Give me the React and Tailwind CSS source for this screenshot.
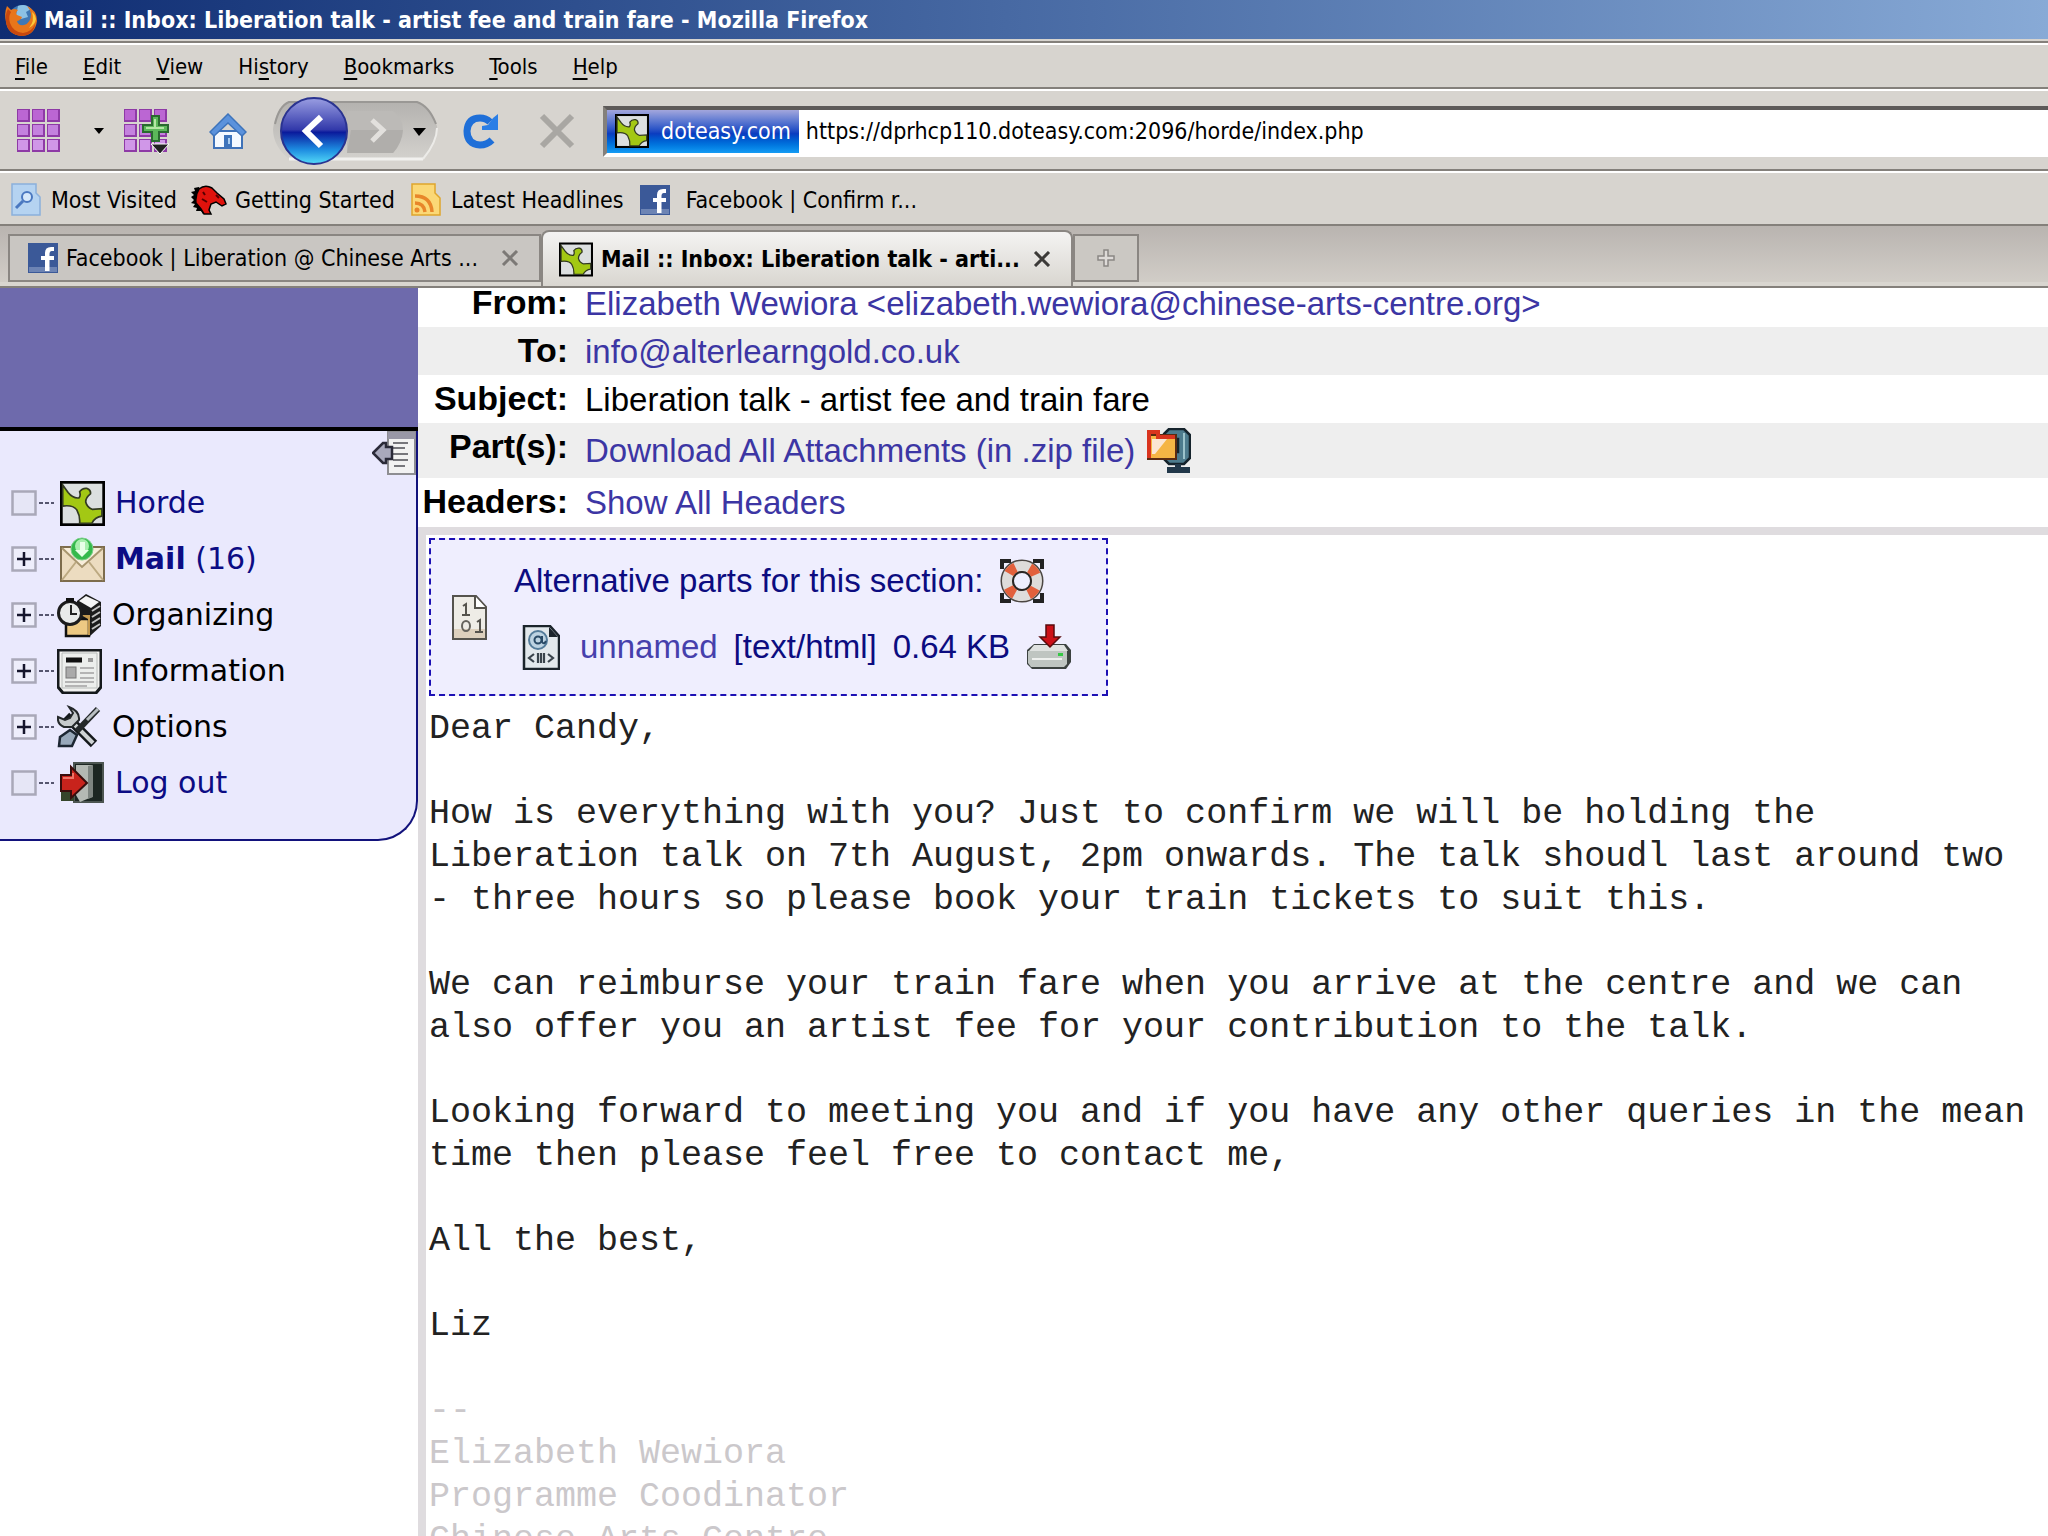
import { useState } from 'react'

const menus = [
  ['', 'F', 'ile'],
  ['', 'E', 'dit'],
  ['', 'V', 'iew'],
  ['Hi', 's', 'tory'],
  ['', 'B', 'ookmarks'],
  ['', 'T', 'ools'],
  ['', 'H', 'elp']
]

const paragraphs = [
  ['Dear Candy,'],
  [
    'How is everything with you? Just to confirm we will be holding the',
    'Liberation talk on 7th August, 2pm onwards. The talk shoudl last around two',
    '- three hours so please book your train tickets to suit this.'
  ],
  [
    'We can reimburse your train fare when you arrive at the centre and we can',
    'also offer you an artist fee for your contribution to the talk.'
  ],
  [
    'Looking forward to meeting you and if you have any other queries in the mean',
    'time then please feel free to contact me,'
  ],
  ['All the best,'],
  ['Liz']
]

const signature = ['--', 'Elizabeth Wewiora', 'Programme Coodinator', 'Chinese Arts Centre']

function HordeIcon({ className }) {
  return (
    <svg viewBox="0 0 133 133" className={className}>
      <rect x="4" y="4" width="125" height="125" fill="#dcdfe0" stroke="#000" strokeWidth="8" />
      <path
        d="M8 12L24 34Q38 52 56 50Q62 44 58 32Q66 20 80 22Q92 26 90 38Q76 48 76 62Q80 78 96 84L124 82V104Q104 106 94 125H58Q60 104 50 86Q40 70 8 74Z"
        fill="#a3c814" stroke="#333a22" strokeWidth="5"
      />
    </svg>
  )
}

function FacebookIcon({ className }) {
  return (
    <svg viewBox="0 0 30 30" className={className}>
      <rect width="30" height="30" fill="#3b5998" />
      <rect x="1" y="24" width="28" height="5" fill="#6d84b4" />
      <path d="M17 28V17H13V13H17V10Q17 4 23 4H26V8H23.500Q21.500 8 21.500 10.500V13H26V17H21.500V28Z" fill="#fff" />
    </svg>
  )
}

function FirefoxIcon() {
  return (
    <svg viewBox="0 0 34 34" className="h-[34px] w-[34px]">
      <circle cx="18" cy="15" r="13" fill="#3f78b4" />
      <path d="M14 3Q22 0 27 6L22 9L24 14L17 16L12 12Z" fill="#8cc2e4" />
      <path
        d="M3 3L7 7Q10 5 14 7Q11 10 13 12L18 14Q17 17 13 18Q14 23 20 22Q27 20 27 11Q26 6 23 3Q33 7 33 18Q31 32 18 33Q4 32 2 19Q0 10 3 3Z"
        fill="#e8761a"
      />
      <path d="M4 6L7 9Q4 14 6 20Q9 29 19 30Q28 29 31 21Q30 32 18 33Q4 32 2 19Q1 11 4 6Z" fill="#c8480e" />
      <path d="M28 9Q31 18 25 25Q31 22 32 16Q31 11 28 9Z" fill="#fbc93a" />
    </svg>
  )
}

function GridIcon({ plus }) {
  const cells = [0, 1, 2]
  return (
    <svg viewBox="0 0 46 46" className="h-[46px] w-[46px]">
      {cells.map(r => cells.map(c => (
        <g key={`${r}-${c}`}>
          <rect x={c * 15 + 1} y={r * 15 + 1} width="13" height="13" fill="#8e3aa6" />
          <rect x={c * 15 + 2} y={r * 15 + 2} width="10" height="10" fill={r === 0 ? '#bb66d3' : r === 1 ? '#c481de' : '#d097e8'} />
        </g>
      )))}
      {plus && (
        <>
          <path d="M29 8H36V17H45V24H36V33H29V24H20V17H29Z" fill="#5cb85a" stroke="#2a6a30" strokeWidth="2" />
          <path d="M32 11V21M23 20H41" stroke="#b4e6a6" strokeWidth="2" />
          <path d="M28 36H46L37 46Z" fill="#222" stroke="#fff" strokeWidth="1" />
        </>
      )}
    </svg>
  )
}

function Caret({ className }) {
  return (
    <svg viewBox="0 0 12 7" className={className}>
      <path d="M0 0H12L6 7Z" fill="#000" />
    </svg>
  )
}

function HomeIcon() {
  return (
    <svg viewBox="0 0 38 36" className="h-9 w-[38px]">
      <path d="M5 18H33V35H5Z" fill="#f4f9ff" stroke="#3f72b8" strokeWidth="2" />
      <path d="M19 1L37 19L33 23L19 10L5 23L1 19Z" fill="#5b92dc" stroke="#3d73bb" strokeWidth="1.500" />
      <rect x="15" y="22" width="8" height="12" fill="#3d73bb" />
      <rect x="19" y="25" width="2" height="6" fill="#a8ccf0" />
    </svg>
  )
}

function BackForward() {
  return (
    <svg viewBox="0 0 168 70" className="h-[70px] w-[168px]">
      <defs>
        <linearGradient id="pill" x1="0" y1="0" x2="0" y2="1">
          <stop offset="0" stopColor="#b4b2af" />
          <stop offset="1" stopColor="#d3d1cd" />
        </linearGradient>
        <linearGradient id="back" x1="0" y1="0" x2="0" y2="1">
          <stop offset="0" stopColor="#9a9ee2" />
          <stop offset="0.480" stopColor="#3239aa" />
          <stop offset="0.520" stopColor="#0a1a9c" />
          <stop offset="0.780" stopColor="#1d8be0" />
          <stop offset="1" stopColor="#55dcf8" />
        </linearGradient>
      </defs>
      <path d="M18 6H146Q156 8 166 30Q166 44 152 63H18Q2 50 2 33Q4 14 18 6Z" fill="url(#pill)" />
      <path d="M152 63H18" stroke="#f2f1ef" strokeWidth="3" />
      <path d="M152 63Q166 46 166 32" stroke="#ecebe8" strokeWidth="2" fill="none" />
      <path d="M4 28Q8 10 18 6H146Q158 10 165 28" stroke="#9a9895" strokeWidth="2" fill="none" />
      <path d="M76 15H122Q132 22 132 34Q131 47 122 57H76Z" fill="#bcbab7" />
      <path d="M76 57H122Q131 47 132 34H80Z" fill="#b0aeab" />
      <path d="M101 24L112 34L101 45" stroke="#e2e0dd" strokeWidth="5" fill="none" />
      <ellipse cx="43" cy="35" rx="33" ry="33" fill="url(#back)" stroke="#2a3390" strokeWidth="2" />
      <path d="M50 21L35 35L50 50" stroke="#fff" strokeWidth="6" fill="none" />
      <path d="M142 32H155L148 40Z" fill="#000" />
    </svg>
  )
}

function ReloadIcon() {
  return (
    <svg viewBox="0 0 36 36" className="h-9 w-9">
      <path d="M29 27Q24 32 17 32Q4 31 4 18Q5 5 17 5Q23 5 27 9" stroke="#1f6fd8" strokeWidth="7" fill="none" />
      <path d="M35 1V17H19V13L25 12L30 5Z" fill="#2a7ee6" />
    </svg>
  )
}

function StopIcon() {
  return (
    <svg viewBox="0 0 36 36" className="h-9 w-9">
      <path d="M3 3L33 33M33 3L3 33" stroke="#a9a7a3" strokeWidth="6" />
    </svg>
  )
}

function SmartFolderIcon() {
  return (
    <svg viewBox="0 0 30 33" className="h-[33px] w-[30px]">
      <path d="M1 1H25V10L29 14V32H1Z" fill="#b5d3f1" stroke="#8bb0dc" strokeWidth="1.500" />
      <circle cx="16" cy="14" r="5" fill="#d6e8fa" stroke="#4a78c0" strokeWidth="2" />
      <path d="M12 18L5 25" stroke="#4a78c0" strokeWidth="3" />
    </svg>
  )
}

function DragonIcon() {
  return (
    <svg viewBox="0 0 36 30" className="h-[30px] w-9">
      <path d="M8 2L3 3L4 6L0 7L3 10L0 12L3 15L0 18L4 19L2 22L6 23L5 26L10 26L12 29L14 14Z" fill="#000" />
      <path
        d="M8 4Q14 -1 21 3L26 8L33 14L35 19L31 21L25 17L20 19L18 25L20 29H13L10 24L5 18Q4 10 8 4Z"
        fill="#e0120c" stroke="#000" strokeWidth="1.500"
      />
      <path d="M25 10L28 13M12 7L14 10M11 14L16 17" stroke="#500" strokeWidth="2" />
    </svg>
  )
}

function FeedIcon() {
  return (
    <svg viewBox="0 0 30 33" className="h-[33px] w-[30px]">
      <path d="M1 1H24V10L29 15V32H1Z" fill="#fbd876" stroke="#dfa52c" strokeWidth="1.500" />
      <path d="M4 13Q20 13 21 29M4 20Q13 20 14 29" stroke="#e8862a" strokeWidth="3.500" fill="none" />
      <circle cx="6" cy="27" r="2.500" fill="#e8862a" />
    </svg>
  )
}

function CloseIcon({ color }) {
  return (
    <svg viewBox="0 0 18 16" className="h-4 w-[18px]">
      <path d="M2 1L16 15M16 1L2 15" stroke={color} strokeWidth="3" />
    </svg>
  )
}

function NodeMark({ open }) {
  return (
    <svg viewBox="0 0 44 26" className="h-[26px] w-11">
      <rect x="1.500" y="1.500" width="23" height="23" fill={open ? '#eeeefb' : '#e6e6f6'} stroke="#a9a8b8" strokeWidth="2.500" />
      {open && <path d="M6 13H20M13 6V20" stroke="#15152c" strokeWidth="2.500" />}
      <path d="M28 13H43" stroke="#55556e" strokeWidth="2" strokeDasharray="4 2" />
    </svg>
  )
}

function MailIcon() {
  return (
    <svg viewBox="0 0 45 45" className="h-[45px] w-[45px]">
      <rect x="1" y="10" width="43" height="34" fill="#ecdcc0" stroke="#7d6c4c" strokeWidth="2" />
      <path d="M2 11L22 30L43 11" fill="#f8eedb" stroke="#a8966f" strokeWidth="2" />
      <path d="M2 43L16 25M43 43L29 25" stroke="#bca981" strokeWidth="2" />
      <circle cx="22" cy="12" r="11" fill="#35b94c" stroke="#7ccf8a" strokeWidth="1" />
      <circle cx="22" cy="9" r="7" fill="#a9efae" />
      <path d="M20 5H25V13H29L22 20L15 13H20Z" fill="#e8ffe8" />
    </svg>
  )
}

function OrganizingIcon() {
  return (
    <svg viewBox="0 0 45 45" className="h-[45px] w-[45px]">
      <path d="M20 8L29 1L44 9V33L33 43L20 30Z" fill="#1b1b1b" />
      <path d="M22 8L29 3L42 9L34 15Z" fill="#f4f4f4" />
      <path d="M35 18L43 13M35 24L43 19M35 30L43 25M35 36L43 31" stroke="#c2c2c2" strokeWidth="2" />
      <path d="M9 26H32V43H9Z" fill="#edc983" stroke="#111" strokeWidth="2.500" />
      <path d="M24 22H33V42H31V26Z" fill="#c49a50" />
      <circle cx="13" cy="20" r="11.500" fill="#e9ebea" stroke="#1c1c1c" strokeWidth="3" />
      <path d="M14 12V21H20" stroke="#222" strokeWidth="2" fill="none" />
      <path d="M9 7H17" stroke="#111" strokeWidth="4" />
    </svg>
  )
}

function InformationIcon() {
  return (
    <svg viewBox="0 0 45 45" className="h-[45px] w-[45px]">
      <path d="M1 1H44V38L39 44H6L1 38Z" fill="#f2f2f0" stroke="#15191c" strokeWidth="3" />
      <path d="M5 4H40V39H5Z" fill="#eceeec" stroke="#b8bcba" strokeWidth="1" />
      <path d="M9 11H25" stroke="#111" strokeWidth="5" />
      <path d="M31 11H36" stroke="#999" strokeWidth="4" />
      <rect x="9" y="18" width="10" height="11" fill="#aaa" stroke="#777" strokeWidth="1" />
      <path d="M23 19H37M23 24H37M23 29H37M8 33H37M8 37H30" stroke="#b4b4b4" strokeWidth="2" />
    </svg>
  )
}

function OptionsIcon() {
  return (
    <svg viewBox="0 0 45 45" className="h-[45px] w-[45px]">
      <path d="M9 11L37 39" stroke="#15191c" strokeWidth="9" />
      <path d="M15 17L36 38" stroke="#cfd3d4" strokeWidth="4" />
      <path d="M12 2L16 8L13 13L8 15L1 12Q0 19 7 22L15 22L22 15Q23 6 12 2Z" fill="#c6cacb" stroke="#24282a" strokeWidth="2" />
      <path d="M41 4L20 26" stroke="#24282a" strokeWidth="6" />
      <path d="M41 4L30 15" stroke="#b9bfc2" strokeWidth="3" />
      <path d="M3 32L13 25L20 30L15 41H2Z" fill="#98a8ba" stroke="#1c2632" strokeWidth="2.500" />
    </svg>
  )
}

function LogoutIcon() {
  return (
    <svg viewBox="0 0 45 45" className="h-[45px] w-[45px]">
      <rect x="14" y="2" width="29" height="39" fill="#1c2622" stroke="#4c5551" strokeWidth="2" />
      <path d="M16 4L32 4V36L20 41L16 34Z" fill="#b4b9b4" />
      <path d="M28 5L33 4V36L28 38Z" fill="#7e8581" />
      <path d="M1 31H14V40H1Z" fill="#35452a" />
      <path d="M1 14H11V6L27 22L11 37V30H1Z" fill="#c8231c" stroke="#3a0d0c" strokeWidth="2" />
      <path d="M3 17H13V12" stroke="#ee7466" strokeWidth="2" fill="none" />
    </svg>
  )
}

function CollapseIcon() {
  return (
    <svg viewBox="0 0 44 44" className="h-11 w-11">
      <rect x="16" y="1" width="27" height="42" fill="#f2f2f2" stroke="#8e8e92" strokeWidth="2" />
      <rect x="16" y="1" width="27" height="7" fill="#9897a6" />
      <path d="M21 12H36M19 17H33M20 23H36M21 29H36M22 35H33" stroke="#77777c" strokeWidth="2" />
      <path d="M1 22L11 12H14V16H20V28H14V32H11Z" fill="#a9a9bc" stroke="#2a2a38" strokeWidth="2.500" />
    </svg>
  )
}

function ZipIcon() {
  return (
    <svg viewBox="0 0 44 46" className="h-[46px] w-11">
      <path d="M17 6L22 1H37L43 7V30L37 36H22L17 31V24H31V11H17Z" fill="#4d7b8d" stroke="#15232c" strokeWidth="2.500" />
      <path d="M37 5V31" stroke="#9cc3cb" strokeWidth="2" />
      <rect x="1" y="7" width="28" height="24" fill="#f5b545" stroke="#5a2b12" strokeWidth="2" />
      <path d="M2 30V4H11V9H28" stroke="#d9341e" strokeWidth="4" fill="none" />
      <path d="M5 11H20L8 26H5Z" fill="#fbe6d4" />
      <path d="M31 36V42M20 42H43" stroke="#22384a" strokeWidth="6" />
    </svg>
  )
}

function BinaryFileIcon() {
  return (
    <svg viewBox="0 0 35 45" className="h-[45px] w-[35px]">
      <path d="M1 1H24L34 12V44H1Z" fill="#eeece6" stroke="#55534d" strokeWidth="2" />
      <path d="M2 34H33V43H2Z" fill="#ddd0bd" />
      <path d="M23 1V13H34" fill="#fff" stroke="#55534d" strokeWidth="2" />
      <path d="M11 11L14 9V19M10 20H18M25 27L28 25V36M23 37H31" stroke="#55534d" strokeWidth="2" fill="none" />
      <ellipse cx="14" cy="31" rx="4" ry="5" fill="none" stroke="#66645e" strokeWidth="2" />
    </svg>
  )
}

function HtmlFileIcon() {
  return (
    <svg viewBox="0 0 38 45" className="h-[45px] w-[38px]">
      <path d="M2 1H28L37 11V44H2Z" fill="#e2e8ec" stroke="#1b242b" strokeWidth="2.500" />
      <path d="M27 2V12H36Z" fill="#1b242b" />
      <circle cx="16" cy="15" r="9" fill="#bdd3e2" stroke="#547c9a" strokeWidth="2" />
      <circle cx="16" cy="15" r="3.500" fill="none" stroke="#294a66" strokeWidth="2" />
      <path d="M20 11V17Q22 20 24 16" stroke="#294a66" strokeWidth="2" fill="none" />
      <path d="M12 29L7 33L12 37M26 29L31 33L26 37M16 28V38M22 28V38M19 28V38" stroke="#3a444c" strokeWidth="2.200" fill="none" />
    </svg>
  )
}

function LifebuoyIcon() {
  return (
    <svg viewBox="0 0 44 44" className="h-11 w-11">
      <path d="M2 10V2H11M33 2H42V10M42 34V42H33M11 42H2V34" fill="none" stroke="#222" strokeWidth="4" />
      <circle cx="22" cy="22" r="15" fill="none" stroke="#4b4642" strokeWidth="13" />
      <circle cx="22" cy="22" r="15" fill="none" stroke="#dedcda" strokeWidth="10" />
      <circle cx="22" cy="22" r="15" fill="none" stroke="#e2603c" strokeWidth="10" strokeDasharray="9 14.560" strokeDashoffset="-7.500" />
      <circle cx="22" cy="22" r="9" fill="#eeeeff" stroke="#2a2624" strokeWidth="2" />
    </svg>
  )
}

function SaveIcon() {
  return (
    <svg viewBox="0 0 46 46" className="h-[46px] w-[46px]">
      <path d="M8 20H40L45 26V38L40 45H6L1 40V26Z" fill="#3c4240" />
      <path d="M8 21H38L42 27H3Z" fill="#dfe2e0" />
      <path d="M2 27H41V40L38 43H5L2 39Z" fill="#bfc5c1" />
      <path d="M6 35H36" stroke="#eef0ee" strokeWidth="2" />
      <rect x="32" y="29" width="5" height="3" fill="#35c845" />
      <path d="M20 1H28V13H34L24 23L14 13H20Z" fill="#cc1018" stroke="#5a0a0c" strokeWidth="1.500" />
    </svg>
  )
}

const tree = [
  { label: 'Horde', icon: <HordeIcon className="h-[45px] w-[45px]" />, link: true },
  { label: 'Mail', count: 16, icon: <MailIcon />, link: true, open: true },
  { label: 'Organizing', icon: <OrganizingIcon />, open: true },
  { label: 'Information', icon: <InformationIcon />, open: true },
  { label: 'Options', icon: <OptionsIcon />, open: true },
  { label: 'Log out', icon: <LogoutIcon />, link: true }
]

function Chrome() {
  const [url, setUrl] = useState('https://dprhcp110.doteasy.com:2096/horde/index.php')

  return (
    <header className="shrink-0 bg-[#d7d4cf] font-['DejaVu_Sans_Condensed','DejaVu_Sans',sans-serif] text-[23px] leading-7 whitespace-nowrap text-black">
      <div className="flex h-[39px] items-center gap-1.5 bg-linear-to-r from-[#0f2c72] to-[#88aad6] pl-1 font-bold text-white">
        <FirefoxIcon />
        <h1>Mail :: Inbox: Liberation talk - artist fee and train fare - Mozilla Firefox</h1>
      </div>

      <nav className="mt-[2px] flex h-12 items-center gap-[35px] border-y-2 border-t-[#84807b] border-b-[#84807b] pt-1 pl-[15px] text-[22px] shadow-[inset_0_2px_0_#fff]">
        {menus.map(([before, key, after]) => (
          <button key={before + key + after}>
            {before}<span className="underline decoration-2 underline-offset-4">{key}</span>{after}
          </button>
        ))}
      </nav>

      <div className="flex h-[82px] items-center border-b-2 border-[#84807b] pt-1 pl-4 shadow-[inset_0_2px_0_#fff]">
        <button aria-label="Speed dial"><GridIcon /></button>
        <button aria-label="Speed dial menu" className="ml-8"><Caret className="h-[6px] w-[10px]" /></button>
        <button aria-label="Add to speed dial" className="ml-[19px]"><GridIcon plus /></button>
        <button aria-label="Home" className="ml-10"><HomeIcon /></button>
        <button aria-label="Back and forward" className="ml-6"><BackForward /></button>
        <button aria-label="Reload" className="ml-6"><ReloadIcon /></button>
        <button aria-label="Stop" className="ml-10"><StopIcon /></button>
        <div className="ml-7 flex h-[51px] flex-1 border-y-4 border-l-4 border-t-[#5d5a59] border-b-white border-l-[#84807b] bg-white">
          <button className="flex items-center gap-3 bg-linear-to-b from-[#a3a6dc] from-0% via-[#0a3cc0] via-55% to-[#159cf4] px-2 text-white">
            <HordeIcon className="h-[34px] w-[34px]" />
            doteasy.com
          </button>
          <input
            aria-label="Location"
            value={url}
            onChange={e => setUrl(e.target.value)}
            className="min-w-0 flex-1 bg-white pl-[7px] outline-none"
          />
        </div>
      </div>

      <nav className="flex h-[55px] items-center border-b-2 border-[#84807b] pt-1 pl-[11px] shadow-[inset_0_2px_0_#fff]">
        <a href="#visited" className="flex items-center gap-2.5"><SmartFolderIcon />Most Visited</a>
        <a href="#started" className="ml-3.5 flex items-center gap-2"><DragonIcon />Getting Started</a>
        <a href="#headlines" className="ml-4 flex items-center gap-2.5"><FeedIcon />Latest Headlines</a>
        <a href="#facebook" className="ml-4 flex items-center gap-4"><FacebookIcon className="h-[30px] w-[30px]" />Facebook | Confirm r...</a>
      </nav>

      <div className="flex h-[60px] items-start bg-linear-to-b from-[#b9b4b0] to-[#d3cfc9] pl-2">
        <div className="mt-2 flex h-12 w-[533px] items-center border-2 border-[#8a8682] bg-[#c9c6c2] pr-5 pl-[18px]">
          <FacebookIcon className="h-[30px] w-[30px]" />
          <button className="ml-2 flex-1 text-left">Facebook | Liberation @ Chinese Arts ...</button>
          <button aria-label="Close tab"><CloseIcon color="#7c7976" /></button>
        </div>
        <div className="mt-1 flex h-14 w-[532px] items-center rounded-t-lg border-x-2 border-t-2 border-[#8a8682] bg-linear-to-b from-[#f4f3f2] to-[#d9d6d0] pr-5 pl-4">
          <HordeIcon className="h-[35px] w-[34px]" />
          <button className="ml-2 flex-1 text-left font-bold">Mail :: Inbox: Liberation talk - arti...</button>
          <button aria-label="Close tab"><CloseIcon color="#3c3a38" /></button>
        </div>
        <button aria-label="New tab" className="mt-2 flex h-12 w-[66px] items-center justify-center border-2 border-[#8a8682] bg-[#cbc8c3]">
          <svg viewBox="0 0 18 18" className="h-[18px] w-[18px]">
            <path d="M7 1H11V7H17V11H11V17H7V11H1V7H7Z" fill="#dedbd8" stroke="#8a8784" strokeWidth="1.500" />
          </svg>
        </button>
      </div>
      <div className="-mt-1 h-[6px] border-b-2 border-[#84807b] bg-[#d9d6d0]" />
    </header>
  )
}

function Sidebar() {
  return (
    <aside className="w-[418px] shrink-0 font-['DejaVu_Sans',sans-serif] text-[30px] leading-9">
      <div className="h-[143px] border-b-4 border-black bg-[#6e6aac]" />
      <div className="rounded-br-[40px] border-r-2 border-b-2 border-[#12127c] bg-[#eae9fd] pb-7">
        <div className="flex justify-end">
          <button aria-label="Hide menu"><CollapseIcon /></button>
        </div>
        <ul>
          {tree.map(item => (
            <li key={item.label} className="flex h-14 items-center pl-[11px]">
              <NodeMark open={item.open} />
              <span className={item.link ? 'mr-2.5 ml-[5px]' : 'mr-2.5 ml-[2px]'}>{item.icon}</span>
              <a href="#menu" className={item.link ? 'text-[#0c0c84]' : 'text-black'}>
                {item.count ? <><b>{item.label}</b> ({item.count})</> : item.label}
              </a>
            </li>
          ))}
        </ul>
      </div>
    </aside>
  )
}

function HeaderRow({ label, shaded, height, children }) {
  return (
    <tr className={`${height} ${shaded ? 'bg-[#eeeeee]' : 'bg-white'}`}>
      <th scope="row" className="w-[150px] text-right align-top text-[34px] leading-[46px] font-bold">{label}</th>
      <td className="pt-[1px] pl-[17px]">{children}</td>
    </tr>
  )
}

function Message() {
  return (
    <main className="min-w-0 flex-1 overflow-hidden bg-white font-['Liberation_Sans',Arial,sans-serif] text-[33px] leading-[46px] whitespace-nowrap text-black">
      <table className="-mt-[9px] w-full border-collapse">
        <tbody>
          <HeaderRow label="From:" height="h-12">
            <a href="#from" className="text-[#3c36a4]">Elizabeth Wewiora &lt;elizabeth.wewiora@chinese-arts-centre.org&gt;</a>
          </HeaderRow>
          <HeaderRow label="To:" height="h-12" shaded>
            <a href="#to" className="text-[#3c36a4]">info@alterlearngold.co.uk</a>
          </HeaderRow>
          <HeaderRow label="Subject:" height="h-12">Liberation talk - artist fee and train fare</HeaderRow>
          <HeaderRow label="Part(s):" height="h-[55px]" shaded>
            <a href="#zip" className="flex items-center gap-3 text-[#3c36a4]">Download All Attachments (in .zip file) <ZipIcon /></a>
          </HeaderRow>
          <HeaderRow label="Headers:" height="h-[49px]">
            <a href="#headers" className="text-[#3c36a4]">Show All Headers</a>
          </HeaderRow>
        </tbody>
      </table>

      <div className="border-t-8 border-l-8 border-[#dfdcdf] pt-[3px] pl-[3px]">
        <section className="flex h-[158px] w-[679px] items-center border-2 border-dashed border-[#1c10b4] bg-[#efeefe] pl-[21px] text-[#0c0c80]">
          <BinaryFileIcon />
          <div className="ml-[27px] flex flex-col gap-5 pb-1.5">
            <p className="flex items-center gap-4">Alternative parts for this section: <LifebuoyIcon /></p>
            <p className="flex items-center gap-4 pl-2">
              <HtmlFileIcon />
              <a href="#part" className="ml-1 text-[#4640ac]">unnamed</a>
              <span>[text/html]</span>
              <span>0.64 KB</span>
              <button aria-label="Save part"><SaveIcon /></button>
            </p>
          </div>
        </section>

        <article className="mt-3 flex flex-col gap-[42px] font-['Liberation_Mono','Courier_New',monospace] text-[35px] leading-[43px] text-[#222]">
          {paragraphs.map(lines => (
            <p key={lines[0]}>
              {lines.map(line => <span key={line} className="block">{line}</span>)}
            </p>
          ))}
          <p className="text-[#cbc8cb]">
            {signature.map(line => <span key={line} className="block">{line}</span>)}
          </p>
        </article>
      </div>
    </main>
  )
}

export default function App() {
  return (
    <div className="flex h-screen flex-col overflow-hidden bg-white">
      <Chrome />
      <div className="flex min-h-0 flex-1">
        <Sidebar />
        <Message />
      </div>
    </div>
  )
}
